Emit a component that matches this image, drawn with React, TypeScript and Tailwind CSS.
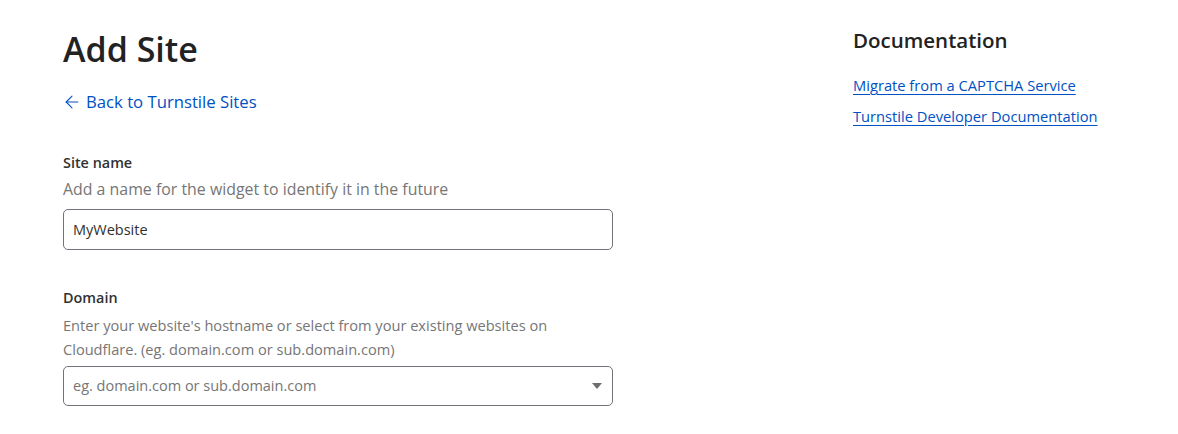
import { ArrowLeft } from 'lucide-react';

export default function App() {
  return (
    <div className="min-h-[434px] bg-white font-['Open_Sans',sans-serif] text-[#313131]">
      <div className="flex pl-[63px] pt-[28px]">
        {/* Main form column */}
        <div className="w-[550px]">
          <h1 className="text-[34px] font-semibold leading-[42px] text-[#222]">Add Site</h1>
          <a href="#" className="mt-[19px] flex items-center gap-[4px] text-[16.7px] text-[#0051c3]">
            <ArrowLeft className="-ml-[1px] h-[20px] w-[20px]" strokeWidth={1.3} />
            Back to Turnstile Sites
          </a>

          <div className="mt-[39px]">
            <label className="block text-[14.4px] font-semibold leading-[20px] text-[#313131]">Site name</label>
            <p className="mt-[6px] text-[15.9px] leading-[20px] text-[#767676]">
              Add a name for the widget to identify it in the future
            </p>
            <div className="mt-[10px] flex h-[41px] items-center rounded-[5px] border border-[#72727a] px-[9px] text-[14.5px] text-[#313131]">
              MyWebsite
            </div>
          </div>

          <div className="mt-[38px]">
            <label className="block text-[14.4px] font-semibold leading-[20px] text-[#313131]">Domain</label>
            <p className="mt-[5px] text-[14.6px] leading-[24px] text-[#767676]">
              Enter your website's hostname or select from your existing websites on
              <br />
              Cloudflare. (eg. domain.com or sub.domain.com)
            </p>
            <div className="mt-[5px] flex h-[40px] items-center justify-between rounded-[5px] border border-[#72727a] pl-[9px] pr-[9px] text-[14.5px] text-[#767676]">
              <span>eg. domain.com or sub.domain.com</span>
              <svg width="10" height="6" viewBox="0 0 10 6" className="mr-[1px]">
                <path d="M0 0h10L5 6z" fill="#6e6e6e" />
              </svg>
            </div>
          </div>
        </div>

        {/* Documentation sidebar */}
        <div className="ml-[240px]">
          <h2 className="mt-[-2px] text-[20.5px] font-semibold leading-[28px] text-[#222]">Documentation</h2>
          <ul className="mt-[20px] flex flex-col gap-[9px] text-[14.7px] leading-[22px]">
            <li>
              <a href="#" className="text-[#0051c3] underline underline-offset-[3px]">Migrate from a CAPTCHA Service</a>
            </li>
            <li>
              <a href="#" className="text-[#0051c3] underline underline-offset-[3px]">Turnstile Developer Documentation</a>
            </li>
          </ul>
        </div>
      </div>
    </div>
  );
}
